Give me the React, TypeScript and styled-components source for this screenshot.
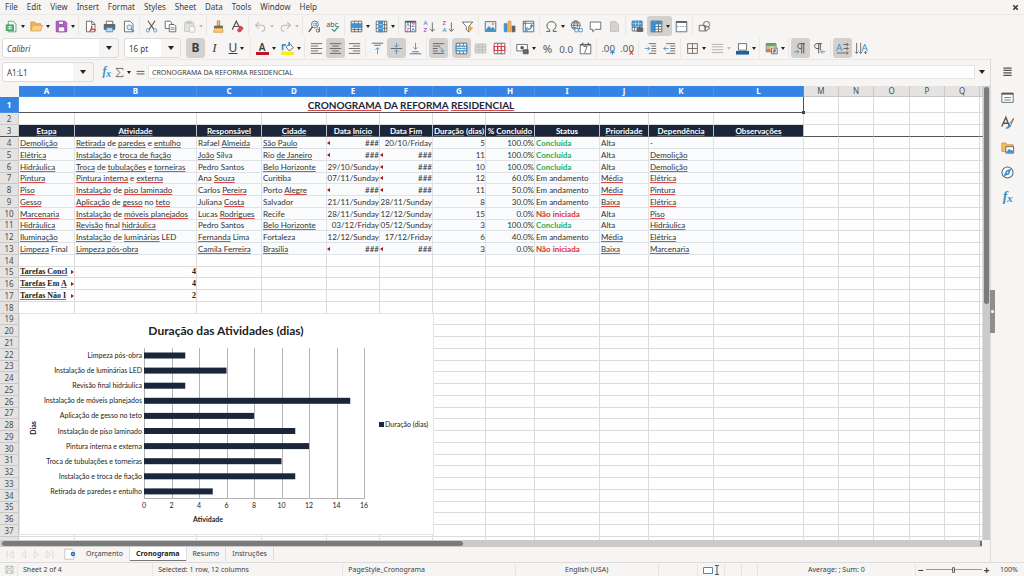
import React from 'react';
import styled, { createGlobalStyle, css } from 'styled-components';

const ui = '"Noto Sans", "Open Sans", sans-serif';
const cellFont = 'Lato, "Open Sans", sans-serif';

const color = {
  chrome: '#f6f5f3',
  line: '#dddcda',
  text: '#3d3d3d',
  ink: '#4c4c4c',
  blue: '#3584e4',
  sky: '#3b8ec8',
  navy: '#1b263b',
  green: '#27ae60',
  red: '#e02f2f',
  active: '#d3d1ce',
};

const GlobalStyle = createGlobalStyle`
  * { box-sizing: border-box; }
  html, body, #root { height: 100%; }
  body { margin: 0; overflow: hidden; background: ${color.chrome}; font: 8px ${ui}; color: ${color.text}; }
  button, input, select { font: inherit; color: inherit; margin: 0; padding: 0; border: 0; background: none; border-radius: 0; }
  button { display: inline-flex; align-items: center; justify-content: center; }
`;

/* ---------- icons ---------- */

const D = '#555';
const B = '#3b8ec8';
const R = '#d9434e';
const V = '#b454c0';
const lines = (rows: number[][], stroke = D) =>
  rows.map(([x1, y, x2], i) => <path key={i} d={`M${x1} ${y}H${x2}`} stroke={stroke} />);
const glyph = (x: number, y: number, size: number, t: string, fill = D, extra: React.SVGProps<SVGTextElement> = {}) => (
  <text x={x} y={y} fontSize={size} fill={fill} stroke="none" fontFamily="Noto Sans, sans-serif" {...extra}>{t}</text>
);
const lato = { fontFamily: 'Lato, sans-serif', fontWeight: 700 };
const serif = { fontFamily: 'Liberation Serif, serif', fontStyle: 'italic', fontWeight: 700 };
const page = 'M3 1.5h7l3.500 3.500v9.500h-10.500z';

const icons: Record<string, React.ReactNode> = {
  new: <><path d="M4 1.500h6l3.500 3.500v9.500H4z" fill="#fff" stroke="#3f9b63" /><path d="M1.500 6h9v7h-9z" fill="#35a35b" stroke="#35a35b" /><path d="M3 8.300h6M3 10.700h6M6 7v5" stroke="#fff" /></>,
  open: <><path d="M1 13V2.500h5l1 2h6v3" fill="#f0b55c" stroke="#d7953a" /><path d="M1 13.500 3.500 6.500H15.500L13 13.500z" fill="#fbd287" stroke="#dda047" /></>,
  save: <><path d="M1.500 1.500h11l2 2v11h-13z" fill="#b264c4" stroke="#9244a8" /><path d="M4.500 1.500h6v4h-6zM4 8.500h8v6H4z" fill="#fff" stroke="#9244a8" /></>,
  pdf: <><path d={page} fill="#fff" stroke={D} /><path d="M9.500 1.500v4h4" stroke={D} /><path d="M7 14c2-2 3-5 2.500-7M8 12c2-1 4-1 6.500 1" stroke={R} strokeWidth="1.600" /></>,
  print: <><path d="M4 5V1.500h8V5" fill="#fff" stroke={D} /><path d="M1.500 5.500h13v6h-13z" fill="#5c6873" stroke={D} /><path d="M4 9.500h8v5H4z" fill="#b9dcf3" stroke={B} /></>,
  preview: <><path d={page} fill="#fff" stroke={D} /><circle cx="9" cy="9" r="3" fill="#d8ecf8" stroke={B} /><path d="m11 11 3.500 3.500" stroke={B} strokeWidth="1.500" /></>,
  cut: <><path d="M3.500 1 11 11.500M12.500 1 5 11.500" stroke={D} strokeWidth="1.300" /><circle cx="3.500" cy="12.800" r="2" stroke={B} /><circle cx="12.500" cy="12.800" r="2" stroke={B} /></>,
  copy: <><path d="M1.500 1.500h6l2 2v7h-8z" fill="#fff" stroke={D} /><path d="M6.500 5.500h6l2 2v7h-8z" fill="#fff" stroke={D} /><path d="M8 9.500h5M8 11.500h5" stroke={B} /></>,
  paste: <g opacity=".45"><path d="M2 3h11v11H2z" fill="#ccc" stroke="#888" /><path d="M5 1.500h5v3H5z" fill="#999" stroke="#888" /><path d="M8 8h6.500v7H8z" fill="#fff" stroke="#888" /></g>,
  clone: <><path d="M6.500 1h3v6h-3z" fill="#f5c36b" stroke="#b8862f" /><path d="M3 7.500h10v2H3z" fill="#777" stroke={D} /><path d="M3 10.500h10l.5 4.500H2z" fill="#f8cf80" stroke="#d7953a" /></>,
  clear: <><path d="M1.500 12 6.500 1.500 11 10M3.500 8h6" stroke={D} strokeWidth="1.500" /><path d="m8 12.500 4-5 3 2.500-3.500 4.500H9z" fill="#e2454f" stroke="#c93640" /></>,
  undo: <path d="M6 2.500 2 6.500l4 4M2 6.500h7.500c5 0 5 7.500 0 7.500" stroke="#bdbbb8" strokeWidth="1.300" />,
  redo: <path d="m10 2.500 4 4-4 4M14 6.500H6.500c-5 0-5 7.500 0 7.500" stroke="#bdbbb8" strokeWidth="1.300" />,
  find: <><circle cx="8.500" cy="5.500" r="4.200" fill="#fff" stroke={D} /><path d="m5.500 8.500-4.500 6" stroke={D} strokeWidth="1.600" /><circle cx="8.500" cy="5.500" r="1.700" stroke={B} /><path d="M10.300 3.500v4" stroke={B} /><circle cx="12" cy="13" r="1.900" stroke={D} /><path d="M14 8.500V15" stroke={D} /></>,
  spell: <>{glyph(-1, 8, 9, 'abc')}<path d="m6 11 3 3 5.500-6.500" stroke="#2f9e6b" strokeWidth="1.500" /></>,
  row: <><path d="M1.500 1.500h13v13h-13zM5.800 1.500v13M10.200 1.500v13M1.500 11.800h13" fill="#fff" stroke={D} /><path d="M1.500 4.500h13v5h-13z" fill="#3f93d4" stroke={B} /></>,
  column: <><path d="M1.500 1.500h13v13h-13zM1.500 5.800h13M1.500 10.200h13M11.800 1.500v13" fill="#fff" stroke={D} /><path d="M4.500 1.500h5v13h-5z" fill="#3f93d4" stroke={B} /><path d="M4.500 5.800h5M4.500 10.200h5" stroke="#a8d1ee" /></>,
  sort: <><path d="M1.500 1.500h13v13h-13zM8 1.500v13" fill="#fff" stroke={D} /><path d="M1.500 2.300h13" stroke={D} strokeWidth="2" /><path d="m3 8 1.800-4L6.500 8M9.500 14l1.800-4 1.700 4" stroke={B} /><path d="M3 10h3.500L3 14h3.500M9.500 4.500H13L9.500 8H13" stroke={V} /></>,
  sortAsc: <>{glyph(0.5, 6.5, 7, 'A', B, lato)}{glyph(0.7, 15, 7, 'Z', V, lato)}<path d="M11.500 3v11M8.500 11l3 3 3-3" stroke={D} /></>,
  sortDesc: <>{glyph(0.7, 6.5, 7, 'Z', V, lato)}{glyph(0.5, 15, 7, 'A', B, lato)}<path d="M11.500 3v11M8.500 11l3 3 3-3" stroke={D} /></>,
  filter: <><path d="M1.500 2.500h13L9.500 8v6.500l-3-2.500V8z" fill="#fff" stroke={D} /><path d="m12 7-3 4h3l-2 4 4.500-5.500h-3z" fill="#f5a33b" stroke="#e08a20" strokeWidth=".5" /></>,
  image: <><path d="M1.500 2h13v12h-13z" fill="#e6f2fb" stroke={D} /><path d="m2 13 4-5 3 3 2-2 3 4z" fill={B} stroke={B} /><circle cx="11" cy="5" r="1.500" fill="#f5a33b" stroke="none" /></>,
  chart: <><path d="M1.500 4.500H5v10H1.500z" fill="#3f93d4" stroke={B} /><path d="M6.300 1.500h3.500v13H6.300z" fill="#f4b65b" stroke="#d7953a" /><path d="M11.200 7.500h3.500v7h-3.500z" fill="#6c6258" stroke={D} /></>,
  pivot: <><path d="M1.500 1.500h13v13h-13zM1.500 4h13M4 1.500v13" fill="#fff" stroke={D} /><path d="M7 11.500c4 0 5-2 5-5M7 9l-2 2.500L7 14M10 8l2-2 2 2" stroke={B} strokeWidth="1.500" /></>,
  omega: <path d="M1.500 14H6v-1.500C.5 9.500 1.500 2 8 2s7.500 7.500 2 10.500V14h4.500" stroke={D} strokeWidth="1.200" />,
  link: <><circle cx="7" cy="6.500" r="5.500" stroke={D} /><path d="M1.500 6.500h11M7 1c-3 3-3 8 0 11M7 1c3 3 3 8 0 11M2.500 3.500h9M2.500 9.500h5" stroke={D} /><path d="M6 10.500h4v4H6zM11 10.500h4v4h-4z" fill="#fff" stroke={B} /></>,
  comment: <path d="M1.500 2.500h13v9H8l-3.500 3v-3h-3z" fill="#fff" stroke={D} />,
  blank: <path d="M3 2h6.500L13 5.500V14H3z" fill="#d5d3d0" stroke="#bdbbb8" />,
  headers: <><path d="M1.500 1.500h12v12h-12zM1.500 9h12M4.500 1.500v12M10.500 1.500v12" fill="#fff" stroke={D} /><path d="M1.500 1.500h12v6h-12z" fill="#3f93d4" stroke={B} /><path d="M1.500 4.500h12M5.500 1.500v6M9.500 1.500v6" stroke="#a8d1ee" /><path d="M7.500 10h7v4h-7z" fill="#5c6873" stroke={D} /></>,
  freeze: <><path d="M1.500 1.500h13v13h-13zM1.500 8h13M1.500 11.300h13M10.500 1.500v13" fill="#fff" stroke={D} /><path d="M1.500 1.500h13v3.500h-13zM1.500 5H6v9.500H1.500z" fill="#3f93d4" stroke={B} /><path d="M6 5v9.500M10 1.500V5" stroke="#2d74ad" /></>,
  split: <><path d="M1.500 2h13v12.500h-13z" fill="#fff" stroke={D} /><path d="M1.500 2.500h13" stroke={D} strokeWidth="2" /><path d="M2 8h12" stroke={B} strokeDasharray="2 1.500" /></>,
  shapes: <><path d="M1.500 6.500h7v7h-7z" stroke={D} /><circle cx="10.500" cy="5.500" r="3.800" stroke={D} /><path d="m9.500 7 5 3-5 4z" fill={color.chrome} stroke={D} /></>,
  alignLeft: lines([[1, 2, 15], [1, 5, 10], [1, 8, 15], [1, 11, 10], [1, 14, 15]]),
  alignCenter: lines([[1, 2, 15], [4, 5, 12], [1, 8, 15], [4, 11, 12], [1, 14, 15]]),
  alignRight: lines([[1, 2, 15], [6, 5, 15], [1, 8, 15], [6, 11, 15], [1, 14, 15]]),
  top: <>{lines([[1, 1.500, 15], [4, 4, 12]])}<path d="M8 15V7M5.500 9.500 8 7l2.500 2.500" stroke={B} /></>,
  middle: <>{lines([[1, 8, 15]])}<path d="M8 1v5M5.500 4 8 6.500 10.500 4M8 15v-5M5.500 12 8 9.500l2.500 2.500" stroke={B} /></>,
  bottom: <>{lines([[4, 12, 12], [1, 14.500, 15]])}<path d="M8 1v8M5.500 6.500 8 9l2.500-2.500" stroke={B} /></>,
  wrap: <>{lines([[1, 2, 15], [1, 5, 10], [1, 8, 7], [1, 11, 7], [1, 14, 15]])}<path d="M9 7c3 0 4 2 4 5M10.500 10.500 13 12.500l2-2.500" stroke={B} /></>,
  merge: <><path d="M1.500 1.500h13v13h-13zM5.800 1.500V5M10.200 1.500V5M5.800 11v3.500M10.200 11v3.500" fill="#fff" stroke={D} /><path d="M1.500 5h13v6h-13z" fill="#e3f1fb" stroke={B} strokeWidth="1.400" /><path d="M3 8h10M5 6.500 3.500 8 5 9.500M11 6.500 12.500 8 11 9.500" stroke={B} /></>,
  mergeOff: <path d="M1.500 2.500h13v11h-13zM1.500 6h13M1.500 10h13M5.800 2.500v11M10.200 2.500v11" fill="#dddbd8" stroke="#b9b7b4" />,
  unmerge: <><path d="M1.500 1.500h13v13h-13zM5.800 1.500v13M10.200 1.500v13" fill="#fff" stroke={D} /><path d="M1.500 5.500h13v5h-13zM5.800 5.500v5M10.200 5.500v5" stroke={R} strokeWidth="1.400" /></>,
  currency: <><path d="M1 3h13v8H1z" fill="#fff" stroke={D} /><circle cx="7.500" cy="7" r="2.200" fill={D} stroke="none" /><path d="M9 9.500h6v5H9z" fill="#666" stroke={D} /></>,
  percent: glyph(2, 13, 14, '%', D),
  number: glyph(-1, 13, 12, '0.0', D),
  date: <><path d="M1.500 3h13v11.500h-13z" fill="#fff" stroke={D} /><path d="M1.500 3.500h13M4.500 1v3M11.500 1v3" stroke={D} strokeWidth="1.500" />{glyph(5, 13, 10, '7')}</>,
  addDec: <>{glyph(-1, 12, 12, '.00')}<path d="M10 13h5.500M12.800 10.300v5.500" stroke={B} strokeWidth="1.300" /></>,
  delDec: <>{glyph(-1, 12, 12, '.00')}<path d="m10.500 10.500 4.500 5M15 10.500l-4.500 5" stroke={R} strokeWidth="1.300" /></>,
  indent: <>{lines([[6, 2, 15], [9, 5, 15], [9, 8, 15], [9, 11, 15], [6, 14, 15]])}<path d="M1 8h6M4.500 5.500 7 8l-2.500 2.500" stroke={B} /></>,
  outdent: <>{lines([[4, 2, 15], [9, 5, 15], [9, 8, 15], [9, 11, 15], [4, 14, 15]])}<path d="M1 8h6M3.500 5.500 1 8l2.500 2.500" stroke={B} /></>,
  borders: <path d="M2 2h12v12H2zM8 2v12M2 8h12" stroke="#6a5a48" />,
  borderStyle: lines([[1, 3, 15], [1, 6, 15], [1, 9.500, 15], [1, 13, 15]], '#a9a7a4'),
  borderColor: <><path d="M3 2h10v8H3z" fill="#fff" stroke={D} /><path d="M0 11h16v4.500H0z" fill="#1f5fa8" stroke="none" /></>,
  cond: <><path d="M1.500 2h12v10h-12z" fill="#fff" stroke={D} /><path d="M2 2.500h11v3H2z" fill="#57a869" stroke="none" /><path d="M2 5.500h5v3H2z" fill="#f1b04e" stroke="none" /><path d="M2 8.500h5v3H2z" fill="#e36f5c" stroke="none" /><path d="M8 7.500h7v7H8z" fill="#fff" stroke={D} /><path d="M9.500 10h4M9.500 12h4M12.500 8.500l-2 5" stroke={D} /></>,
  ltr: <><path d="M13.500 2H7.500c-4 0-4 6 0 6H9M9.500 2v12M12 2v12" stroke={D} strokeWidth="1.200" /><path d="M0 12h6M3.500 9.500 6 12l-2.500 2.500" stroke={B} /></>,
  rtl: <><path d="M11 2H5c-4 0-4 6 0 6h2M7 2v12M9 2v8" stroke={D} strokeWidth="1.200" /><path d="M9.500 12h6M12 9.500 9.500 12l2.500 2.500" stroke={B} /></>,
  dirLR: <>{glyph(0, 11, 12, 'A', B)}<path d="M9 3h6M13 1l2 2-2 2M9 8h6M13 6l2 2-2 2M1 13.500h14M13 11.500l2 2-2 2" stroke={D} /></>,
  dirTB: <>{glyph(8, 11, 12, 'A', B)}<path d="M2 1v13M0 12l2 2 2-2M7 1v13M5 12l2 2 2-2M13 11v3M11.500 12.500l1.500 2 1.500-2" stroke={D} /></>,
  properties: <><path d="M1 2.500h14v11.500H1z" fill="#fff" stroke={D} /><path d="M1 3.500h14" stroke={D} strokeWidth="2" /><path d="M4 8h8M4 11h8" stroke={B} strokeWidth="1.200" /></>,
  styles: <><path d="M1 13 6 1.500 10.500 13M3 9h6" stroke={D} strokeWidth="1.700" /><path d="m15.500 3-6 8 2 1.500z" fill="#fff" stroke={D} /><path d="M6 15c3 .5 5-1 5.500-3l-2-1c-1 2-1 3-3.500 4z" fill={B} stroke={B} /></>,
  gallery: <><path d="M1 13V2.500h5l1.500 2H15V13z" fill="#f3b95f" stroke="#d7953a" /><path d="M6 7h9.500v8H6z" fill="#fff" stroke={D} /><path d="m7 14 3-4 2 2 1-1 2 3z" fill={B} stroke={B} /></>,
  navigator: <><circle cx="8" cy="8" r="6.800" fill="#fff" stroke="#56646e" strokeWidth="1.300" /><path d="m12 4-2.500 6-5.500 2 2.500-6z" fill={B} stroke={B} /><circle cx="8" cy="8" r="1" fill="#fff" stroke="none" /></>,
  fx: <>{glyph(2, 12, 17, 'f', B, serif)}{glyph(7.5, 14, 14, 'x', B, serif)}</>,
  sigma: <path d="M13 4V2H3l5.500 6L3 14h10v-2" stroke={D} strokeWidth="1.200" />,
  equals: <path d="M1 6h14M1 10.500h14" stroke={D} strokeWidth="1.700" />,
  menu: <path d="M2 3h12M2 6.500h12M2 10h12M2 13.500h12" stroke={D} strokeWidth="1.800" />,
  close: <path d="m4 4 8 8M12 4l-8 8" stroke="#333" strokeWidth="2.600" />,
  addSheet: <><path d="M1 1.500h9l3 3V15H1z" fill="#fff" stroke="#b9b7b4" /><circle cx="12" cy="8" r="3" fill="#2b6cb0" stroke="none" /><path d="M10.500 8h3" stroke="#fff" /></>,
  disk: <><path d="M1.500 2h13v12.500h-13z" stroke="#9a9896" /><path d="M4.500 2v4h7V2M4 14.500V9.500h8v5" stroke="#9a9896" /></>,
  first: <path d="M3 2v12M12 3 6 8l6 5z" stroke="#d2d0cd" />,
  prev: <path d="M11 3 5 8l6 5z" stroke="#d2d0cd" />,
  next: <path d="m5 3 6 5-6 5z" stroke="#d2d0cd" />,
  last: <path d="M13 2v12M4 3l6 5-6 5z" stroke="#d2d0cd" />,
};

const Svg = styled.svg<{ $size: number }>`
  width: ${(p) => p.$size}px;
  height: ${(p) => p.$size}px;
  flex: none;
  overflow: visible;
`;
const Icon = ({ name, size = 13 }: { name: string; size?: number }) => (
  <Svg $size={size} viewBox="0 0 16 16" fill="none" strokeWidth={1} aria-hidden>{icons[name]}</Svg>
);

const Caret = styled.span<{ $wide?: boolean; $faint?: boolean }>`
  width: 0;
  height: 0;
  flex: none;
  border: solid transparent;
  border-width: ${(p) => (p.$wide ? '4px 3px 0' : '3px 2px 0')};
  border-top-color: ${(p) => (p.$faint ? '#c4c2bf' : '#222')};
`;

/* ---------- menu bar and toolbars ---------- */

const Window = styled.div`
  display: flex;
  flex-direction: column;
  height: 100vh;
`;
const MenuBar = styled.nav`
  display: flex;
  align-items: center;
  gap: 9px;
  height: 15px;
  padding: 0 4px 0 5px;
  border-bottom: 1px solid #eae9e6;
  line-height: 14px;
  flex: none;
`;
const MenuItem = styled.button``;
const Spacer = styled.span`flex: 1;`;
const Toolbar = styled.div`
  display: flex;
  align-items: center;
  height: 22px;
  padding-left: 2px;
  flex: none;
`;
const ToolButton = styled.button<{ $active?: boolean; $menu?: boolean }>`
  width: ${(p) => (p.$menu ? 25 : 19)}px;
  height: 20px;
  flex: none;
  gap: 3px;
  border-radius: 3px;
  ${(p) => p.$active && css`background: ${color.active};`}
`;
const Divider = styled.span`
  width: 1px;
  height: 20px;
  margin: 0 2px 0 1px;
  background: #e9e8e5;
  flex: none;
`;
const Letter = styled.span<{ $kind: 'b' | 'i' | 'u' | 'color' }>`
  font-size: 12px;
  line-height: 12px;
  ${(p) => p.$kind === 'b' && css`font-weight: 700;`}
  ${(p) => p.$kind === 'i' && css`font-family: "Liberation Serif", serif; font-style: italic; font-size: 13px;`}
  ${(p) => p.$kind === 'u' && css`text-decoration: underline;`}
  ${(p) => p.$kind === 'color' && css`font-size: 10px; line-height: 10px; width: 13px; border-bottom: 3px solid #c3161c; font-weight: 600;`}
`;

type Tool = { id: string; label: string; menu?: boolean; active?: boolean; faint?: boolean };
const t = (id: string, label: string, o: Partial<Tool> = {}): Tool => ({ id, label, ...o });
const standardGroups: Tool[][] = [
  [t('new', 'New', { menu: true }), t('open', 'Open', { menu: true }), t('save', 'Save', { menu: true })],
  [t('pdf', 'Export as PDF'), t('print', 'Print'), t('preview', 'Print preview')],
  [t('cut', 'Cut'), t('copy', 'Copy'), t('paste', 'Paste', { menu: true, faint: true })],
  [t('clone', 'Clone formatting'), t('clear', 'Clear formatting')],
  [t('undo', 'Undo', { menu: true, faint: true }), t('redo', 'Redo', { menu: true, faint: true })],
  [t('find', 'Find and replace'), t('spell', 'Spelling')],
  [t('row', 'Row', { menu: true }), t('column', 'Column', { menu: true })],
  [t('sort', 'Sort'), t('sortAsc', 'Sort ascending'), t('sortDesc', 'Sort descending'), t('filter', 'AutoFilter')],
  [t('image', 'Insert image'), t('chart', 'Insert chart'), t('pivot', 'Insert pivot table')],
  [t('omega', 'Special character', { menu: true }), t('link', 'Hyperlink'), t('comment', 'Comment'), t('blank', 'Headers and footers')],
  [t('headers', 'Print area'), t('freeze', 'Freeze', { menu: true, active: true }), t('split', 'Split window')],
  [t('shapes', 'Draw functions')],
];
const formatGroups: Tool[][] = [
  [t('alignLeft', 'Align left'), t('alignCenter', 'Align center', { active: true }), t('alignRight', 'Align right')],
  [t('top', 'Align top'), t('middle', 'Center vertically', { active: true }), t('bottom', 'Align bottom')],
  [t('wrap', 'Wrap text', { active: true })],
  [t('merge', 'Merge and center', { active: true }), t('mergeOff', 'Merge cells'), t('unmerge', 'Unmerge cells')],
  [t('currency', 'Currency', { menu: true }), t('percent', 'Percent'), t('number', 'Number'), t('date', 'Date')],
  [t('addDec', 'Add decimal'), t('delDec', 'Delete decimal')],
  [t('indent', 'Increase indent'), t('outdent', 'Decrease indent')],
  [t('borders', 'Borders', { menu: true }), t('borderStyle', 'Border style', { menu: true, faint: true }), t('borderColor', 'Border color', { menu: true })],
  [t('cond', 'Conditional', { menu: true })],
  [t('ltr', 'Left to right', { active: true }), t('rtl', 'Right to left')],
  [t('dirLR', 'Text horizontal', { active: true }), t('dirTB', 'Text vertical')],
];
const ToolGroups = ({ groups }: { groups: Tool[][] }) => (
  <>
    {groups.map((group, i) => (
      <React.Fragment key={i}>
        {i > 0 && <Divider />}
        {group.map((tool) => (
          <ToolButton key={tool.id} aria-label={tool.label} $menu={tool.menu} $active={tool.active}>
            <Icon name={tool.id} />
            {tool.menu && <Caret $faint={tool.faint} />}
          </ToolButton>
        ))}
      </React.Fragment>
    ))}
  </>
);

const Combo = styled.label<{ $w: number; $arrow: number }>`
  display: grid;
  grid-template-columns: 1fr ${(p) => p.$arrow}px;
  align-items: center;
  justify-items: center;
  width: ${(p) => p.$w}px;
  height: 20px;
  margin-right: 5px;
  border: 1px solid ${color.line};
  border-radius: 3px;
  background: linear-gradient(to left, ${color.chrome} ${(p) => p.$arrow}px, #fff 0);
  flex: none;

  > select, > input {
    grid-area: 1 / 1 / 2 / 3;
    width: 100%;
    height: 100%;
    padding-left: 4px;
    appearance: none;
    outline: 0;
  }
  > span { grid-area: 1 / 2; }
`;
const FontSelect = styled.select<{ $italic?: boolean }>`
  font-style: ${(p) => (p.$italic ? 'italic' : 'normal')};
`;

const FormulaRow = styled.div`
  display: flex;
  align-items: center;
  height: 27px;
  padding: 0 5px 2px 2px;
  border-top: 1px solid #e9e8e5;
  flex: none;
`;
const NameInput = styled.input``;
const FormulaButton = styled.button<{ $w: number }>`
  width: ${(p) => p.$w}px;
  height: 16px;
  flex: none;
`;
const FormulaInput = styled.input`
  flex: 1;
  min-width: 0;
  height: 14px;
  margin: 0 4px 0 1px;
  padding-left: 3px;
  border: 1px solid #e6e5e2;
  background: #fff;
  font-size: 7px;
  outline: 0;
`;

/* ---------- work area ---------- */

const Work = styled.div`
  display: flex;
  flex: 1;
  min-height: 0;
`;
const Main = styled.main`
  display: flex;
  flex-direction: column;
  flex: 1;
  min-width: 0;
`;
const SheetArea = styled.div`
  display: flex;
  flex: 1;
  min-height: 0;
`;
const SheetView = styled.div`
  position: relative;
  flex: 1;
  min-width: 0;
  overflow: hidden;
  background: #fff;
`;
const VScroll = styled.div`
  width: 7px;
  background: #cccbc9;
  padding: 1px;
  flex: none;
`;
const VThumb = styled.div`
  height: 48%;
  border-radius: 3px;
  background: #7b7b7b;
`;
const HScroll = styled.div`
  display: flex;
  justify-content: space-between;
  height: 7px;
  margin-right: 8px;
  padding: 1px 0 1px 2px;
  background: #cccbc9;
  flex: none;
`;
const HThumb = styled.div`
  width: 47%;
  border-radius: 3px;
  background: #7b7b7b;
`;
const SplitGrip = styled.div`
  width: 2px;
  background: #6e6e6e;
`;
const Sidebar = styled.aside`
  position: relative;
  display: flex;
  flex-direction: column;
  align-items: center;
  gap: 9px;
  width: 34px;
  padding-top: 4px;
  border-left: 1px solid ${color.line};
  flex: none;
`;
const SideButton = styled.button<{ $first?: boolean }>`
  width: 18px;
  height: 16px;
  margin-bottom: ${(p) => (p.$first ? 1 : 0)}px;
`;
const SideHandle = styled.span`
  position: absolute;
  left: -1px;
  top: 46%;
  display: flex;
  align-items: center;
  width: 5px;
  height: 43px;
  background: #8f8e8c;

  &::after {
    content: '';
    width: 3px;
    height: 3px;
    margin-left: 1px;
    border-radius: 50%;
    background: #fff;
  }
`;

/* ---------- sheet ---------- */

const Table = styled.table`
  width: 100%;
  table-layout: fixed;
  border-collapse: separate;
  border-spacing: 0;
  font-family: ${cellFont};
  color: #333;
  line-height: 10px;
`;
const Row = styled.tr<{ $h?: number }>`
  height: ${(p) => p.$h ?? 12}px;
`;
const Corner = styled.th`
  padding: 0;
  background: ${color.chrome};
`;
const HeadCell = styled.th<{ $on?: boolean; $freeze?: boolean }>`
  padding: 0;
  overflow: hidden;
  font: ${(p) => (p.$on ? 700 : 400)} 8px/10px ${ui};
  color: ${(p) => (p.$on ? '#fff' : '#4d4d4d')};
  background: ${(p) => (p.$on ? color.blue : '#e4e3e1')};
  border-right: 1px solid ${(p) => (p.$on ? '#4d90e0' : '#c9c8c6')};
  border-bottom: 1px solid ${(p) => (p.$freeze ? '#555' : p.$on ? '#4d90e0' : '#c9c8c6')};
`;
type CellProps = { $align?: 'left' | 'right' | 'center'; $tone?: 'green' | 'red'; $data?: boolean; $freeze?: boolean; $serif?: boolean };
const Cell = styled.td<CellProps>`
  padding: 0 0 0 ${(p) => (p.$align === 'right' ? 0 : 1)}px;
  overflow: hidden;
  white-space: nowrap;
  font-size: 8px;
  text-align: ${(p) => p.$align ?? 'left'};
  border-right: 1px solid ${(p) => (p.$data ? '#dfe2e6' : '#dcdcdc')};
  border-bottom: 1px solid ${(p) => (p.$freeze ? '#555' : p.$data ? '#dfe2e6' : '#dcdcdc')};
  ${(p) => p.$data && css`background: #f9fbfc;`}
  ${(p) => p.$tone && css`color: ${color[p.$tone]}; font-weight: 700;`}
  ${(p) => p.$serif && css`font: 700 8px/10px "Liberation Serif", serif; color: #222;`}
`;
const TitleCell = styled.td`
  position: relative;
  padding: 0;
  text-align: center;
  white-space: nowrap;
  font-size: 10px;
  font-weight: 700;
  line-height: 14px;
  color: ${color.navy};
  border-right: 1px solid #555;
  border-bottom: 1px solid #555;

  &::after {
    content: '';
    position: absolute;
    right: -2px;
    bottom: -2px;
    width: 3px;
    height: 3px;
    background: #444;
  }
`;
const FieldCell = styled.th`
  padding: 0;
  overflow: hidden;
  white-space: nowrap;
  font-size: 8px;
  font-weight: 700;
  color: #fff;
  background: ${color.navy};
  border-right: 1px solid #b9bec8;
  border-bottom: 1px solid #555;
`;
const Misspelt = styled.span`
  text-decoration: underline solid #dd4a4c 1px;
  text-underline-offset: 1px;
  text-decoration-skip-ink: none;
`;
const CellBody = styled.span`
  display: flex;
  align-items: center;
  justify-content: space-between;
`;
const Overflow = styled.i<{ $right?: boolean }>`
  flex: none;
  width: 0;
  height: 0;
  border: 2px solid transparent;
  ${(p) => (p.$right ? css`border-left: 3px solid #a11; border-right: 0;` : css`border-right: 3px solid #a11; border-left: 0;`)}
`;

/* Text between tildes is flagged by the spell checker. */
const Spelled = ({ text }: { text: string }) => (
  <>{text.split('~').map((part, i) => (i % 2 ? <Misspelt key={i}>{part}</Misspelt> : part))}</>
);

const columnWidths = [19, 56, 122, 65, 65, 53, 53, 53, 49, 65, 49, 65, 90, 35, 35, 36, 35, 35];
const letters = 'ABCDEFGHIJKLMNOPQ'.split('');
const fields = ['~Etapa~', '~Atividade~', '~Responsável~', '~Cidade~', 'Data ~Início~', 'Data ~Fim~', '~Duração~ (~dias~)', '% ~Concluído~', 'Status', '~Prioridade~', '~Dependência~', '~Observações~'];
const tasks: string[][] = [
  ['~Demolição~', '~Retirada~ de ~paredes~ e ~entulho~', 'Rafael ~Almeida~', '~São Paulo~', '###', '20/10/Friday', '5', '100.0%', 'Concluída', 'Alta', '-', ''],
  ['~Elétrica~', '~Instalação~ e ~troca de fiação~', '~João~ Silva', 'Rio ~de Janeiro~', '###', '###', '11', '100.0%', 'Concluída', 'Alta', '~Demolição~', ''],
  ['~Hidráulica~', '~Troca~ de ~tubulações~ e ~torneiras~', 'Pedro Santos', '~Belo Horizonte~', '29/10/Sunday', '###', '10', '100.0%', 'Concluída', 'Alta', '~Demolição~', ''],
  ['~Pintura~', '~Pintura interna~ e ~externa~', 'Ana ~Souza~', 'Curitiba', '07/11/Sunday', '###', '12', '60.0%', 'Em andamento', '~Média~', '~Elétrica~', ''],
  ['~Piso~', '~Instalação~ de ~piso laminado~', 'Carlos ~Pereira~', 'Porto ~Alegre~', '###', '###', '11', '50.0%', 'Em andamento', '~Média~', '~Pintura~', ''],
  ['~Gesso~', '~Aplicação~ de ~gesso~ no ~teto~', 'Juliana ~Costa~', 'Salvador', '21/11/Sunday', '28/11/Sunday', '8', '30.0%', 'Em andamento', '~Baixa~', '~Elétrica~', ''],
  ['~Marcenaria~', '~Instalação~ de ~móveis planejados~', 'Lucas ~Rodrigues~', 'Recife', '28/11/Sunday', '12/12/Sunday', '15', '0.0%', 'Não iniciada', 'Alta', '~Piso~', ''],
  ['~Hidráulica~', '~Revisão~ final ~hidráulica~', 'Pedro Santos', '~Belo Horizonte~', '03/12/Friday', '05/12/Sunday', '3', '100.0%', 'Concluída', 'Alta', '~Hidráulica~', ''],
  ['~Iluminação~', '~Instalação~ de ~luminárias~ LED', '~Fernanda~ Lima', 'Fortaleza', '12/12/Sunday', '17/12/Friday', '6', '40.0%', 'Em andamento', '~Média~', '~Elétrica~', ''],
  ['~Limpeza~ Final', '~Limpeza pós-obra~', '~Camila Ferreira~', '~Brasília~', '###', '###', '3', '0.0%', 'Não iniciada', '~Baixa~', '~Marcenaria~', ''],
];
const summary: Record<number, [string, string]> = {
  15: ['~Tarefas Concl~', '4'],
  16: ['~Tarefas~ Em ~A~', '4'],
  17: ['~Tarefas Não I~', '2'],
};
const lastRow = 37;
const blanks = (from: number, to: number, freeze = false) =>
  Array.from({ length: to - from }, (_, i) => <Cell key={from + i} $freeze={freeze} />);
const tone = (v: string) => (v === 'Concluída' ? 'green' : v === 'Não iniciada' ? 'red' : undefined);

const TaskCell = ({ value, col }: { value: string; col: number }) => {
  if (value === '###') {
    return <Cell $data $align="right"><CellBody><Overflow />###</CellBody></Cell>;
  }
  return (
    <Cell $data $align={col >= 4 && col <= 7 ? 'right' : 'left'} $tone={tone(value)}>
      <Spelled text={value} />
    </Cell>
  );
};

const BodyRow = ({ n }: { n: number }) => {
  const task = tasks[n - 4];
  const total = summary[n];
  return (
    <Row $h={n % 4 === 3 ? 11 : 12}>
      <HeadCell>{n <= lastRow && n}</HeadCell>
      {task && task.map((v, i) => <TaskCell key={i} value={v} col={i} />)}
      {total && (
        <>
          <Cell $serif><CellBody><span><Spelled text={total[0]} /></span><Overflow $right /></CellBody></Cell>
          <Cell $serif $align="right">{total[1]}</Cell>
        </>
      )}
      {blanks(task ? 12 : total ? 2 : 0, 18)}
    </Row>
  );
};

const Sheet = () => (
  <Table>
    <colgroup>
      {columnWidths.map((w, i) => <col key={i} style={{ width: w }} />)}
      <col />
    </colgroup>
    <thead>
      <Row $h={11}>
        <Corner />
        {letters.map((l, i) => <HeadCell key={l} scope="col" $on={i < 12}>{l}</HeadCell>)}
        <HeadCell />
      </Row>
    </thead>
    <tbody>
      <Row $h={16}>
        <HeadCell $on>1</HeadCell>
        <TitleCell colSpan={12}><Spelled text="~CRONOGRAMA~ DA ~REFORMA~ ~RESIDENCIAL~" /></TitleCell>
        {blanks(12, 18)}
      </Row>
      <Row><HeadCell>2</HeadCell>{blanks(0, 18)}</Row>
      <Row>
        <HeadCell $freeze>3</HeadCell>
        {fields.map((f) => <FieldCell key={f} scope="col"><Spelled text={f} /></FieldCell>)}
        {blanks(12, 18, true)}
      </Row>
      {Array.from({ length: 35 }, (_, i) => <BodyRow key={i} n={i + 4} />)}
    </tbody>
  </Table>
);

/* ---------- chart ---------- */

const ChartFrame = styled.figure`
  position: absolute;
  left: 19px;
  top: 227px;
  width: 415px;
  height: 222px;
  margin: 0;
  background: #fff;
  border: 1px solid #e4e4e4;
`;
const ChartSvg = styled.svg`
  display: block;
  width: 100%;
  height: 100%;
  font: 7px ${cellFont};
  fill: #222;
`;
const bars: [string, number][] = [
  ['Limpeza pós-obra', 3], ['Instalação de luminárias LED', 6], ['Revisão final hidráulica', 3],
  ['Instalação de móveis planejados', 15], ['Aplicação de gesso no teto', 8], ['Instalação de piso laminado', 11],
  ['Pintura interna e externa', 12], ['Troca de tubulações e torneiras', 10], ['Instalação e troca de fiação', 11],
  ['Retirada de paredes e entulho', 5],
];
const plot = { x: 124, y: 34, w: 220, h: 151 };
const sx = (v: number) => plot.x + (v / 16) * plot.w;
const band = plot.h / bars.length;

const Chart = () => (
  <ChartFrame>
    <ChartSvg viewBox="0 0 413 220" role="img" aria-label="Duração das Atividades">
      <text x={206} y={21} textAnchor="middle" fontSize={12} fontWeight={700}>Duração das Atividades (dias)</text>
      {[0, 2, 4, 6, 8, 10, 12, 14, 16].map((v) => (
        <g key={v}>
          <path d={`M${Math.round(sx(v)) + 0.5} ${plot.y}v${plot.h}`} stroke="#b3b3b3" />
          <text x={sx(v)} y={194} textAnchor="middle">{v}</text>
        </g>
      ))}
      <path d={`M${plot.x} ${plot.y + plot.h - 0.5}h${plot.w}`} stroke="#b3b3b3" />
      {bars.map(([name, v], i) => (
        <g key={name}>
          <rect x={plot.x} y={plot.y + band * i + 4.5} width={sx(v) - plot.x} height={6} fill={color.navy} />
          <text x={plot.x - 2} y={plot.y + band * i + 10} textAnchor="end">{name}</text>
        </g>
      ))}
      <text transform="translate(16 114) rotate(-90)" textAnchor="middle" fontWeight={700}>Dias</text>
      <text x={188} y={208} textAnchor="middle" fontWeight={700}>Atividade</text>
      <rect x={359} y={108} width={5} height={5} fill={color.navy} />
      <text x={365} y={113}>Duração (dias)</text>
    </ChartSvg>
  </ChartFrame>
);

/* ---------- tabs and status bar ---------- */

const TabStrip = styled.div`
  display: flex;
  align-items: stretch;
  height: 15px;
  padding: 0 0 1px 5px;
  flex: none;
`;
const TabNav = styled.div`
  display: flex;
  align-items: center;
  width: 75px;
  padding-right: 4px;
  gap: 2px;
`;
const TabList = styled.div`
  display: flex;
  align-items: stretch;
`;
const Tab = styled.button<{ $on?: boolean }>`
  padding: 0 6px;
  font-size: 7px;
  line-height: 12px;
  border-right: 1px solid ${color.line};
  ${(p) => p.$on && css`font-weight: 700; background: #fff; color: #222; box-shadow: inset 0 -1px #777;`}
`;
const StatusBar = styled.footer`
  display: grid;
  grid-template-columns: 18px 135fr 190fr 172fr 143fr 39fr 27fr 17fr 16fr 158fr 72px 36px;
  align-items: center;
  height: 14px;
  border-top: 1px solid ${color.line};
  font-size: 7px;
  flex: none;
`;
const Status = styled.span<{ $center?: boolean }>`
  display: flex;
  align-items: center;
  justify-content: ${(p) => (p.$center ? 'center' : 'flex-start')};
  height: 12px;
  padding-left: ${(p) => (p.$center ? 0 : 5)}px;
  border-right: 1px solid #e6e5e2;
`;
const ZoomRow = styled.span`
  display: flex;
  align-items: center;
  gap: 2px;
  padding-left: 2px;
`;
const ZoomStep = styled.button`
  width: 6px;
  height: 10px;
  font-size: 10px;
  font-weight: 700;
  line-height: 10px;
`;
const ZoomSlider = styled.input`
  appearance: none;
  width: 56px;
  height: 8px;
  background: linear-gradient(#999, #999) center / 100% 1px no-repeat;
  &::-webkit-slider-thumb {
    appearance: none;
    width: 3px;
    height: 6px;
    border: 1px solid #666;
    border-radius: 1px;
    background: #ddd;
  }
`;
const ZoomValue = styled.span`padding-left: 12px;`;

const menus = ['File', 'Edit', 'View', 'Insert', 'Format', 'Styles', 'Sheet', 'Data', 'Tools', 'Window', 'Help'];
const tabs = ['Orçamento', 'Cronograma', 'Resumo', 'Instruções'];

export default function App() {
  return (
    <>
      <GlobalStyle />
      <Window>
        <MenuBar>
          {menus.map((m) => <MenuItem key={m}>{m}</MenuItem>)}
          <Spacer />
          <MenuItem aria-label="Close"><Icon name="close" size={9} /></MenuItem>
        </MenuBar>
        <Toolbar role="toolbar" aria-label="Standard">
          <ToolGroups groups={standardGroups} />
        </Toolbar>
        <Toolbar role="toolbar" aria-label="Formatting">
          <Combo $w={117} $arrow={19}>
            <FontSelect aria-label="Font name" $italic><option>Calibri</option></FontSelect>
            <Caret $wide />
          </Combo>
          <Combo $w={57} $arrow={19}>
            <FontSelect aria-label="Font size"><option>16 pt</option></FontSelect>
            <Caret $wide />
          </Combo>
          <ToolButton aria-label="Bold" $active><Letter $kind="b">B</Letter></ToolButton>
          <ToolButton aria-label="Italic"><Letter $kind="i">I</Letter></ToolButton>
          <ToolButton aria-label="Underline" $menu><Letter $kind="u">U</Letter><Caret /></ToolButton>
          <Divider />
          <ToolButton aria-label="Font color" $menu><Letter $kind="color">A</Letter><Caret /></ToolButton>
          <ToolButton aria-label="Highlighting" $menu>
            <Svg $size={13} viewBox="0 0 16 16" fill="none" aria-hidden>
              <path d="M0 12h16v4H0z" fill="#f7ee12" />
              <path d="m6 6 5-4 4 5-5 4z" fill="#fff" stroke={D} />
              <path d="M2 10V3.500h4M10 0v5" stroke={B} strokeWidth="2" />
            </Svg>
            <Caret />
          </ToolButton>
          <Divider />
          <ToolGroups groups={formatGroups} />
        </Toolbar>
        <Work>
          <Main>
            <FormulaRow>
              <Combo $w={92} $arrow={20}>
                <NameInput aria-label="Name box" defaultValue="A1:L1" />
                <Caret $wide />
              </Combo>
              <FormulaButton $w={14} aria-label="Function wizard"><Icon name="fx" size={11} /></FormulaButton>
              <FormulaButton $w={12} aria-label="Select function"><Icon name="sigma" size={11} /></FormulaButton>
              <FormulaButton $w={8} aria-label="Function list"><Caret /></FormulaButton>
              <FormulaButton $w={14} aria-label="Formula"><Icon name="equals" size={9} /></FormulaButton>
              <FormulaInput aria-label="Formula input" defaultValue="CRONOGRAMA DA REFORMA RESIDENCIAL" />
              <Caret $wide />
            </FormulaRow>
            <SheetArea>
              <SheetView>
                <Sheet />
                <Chart />
              </SheetView>
              <VScroll><VThumb /></VScroll>
            </SheetArea>
            <HScroll><HThumb /><SplitGrip /></HScroll>
            <TabStrip>
              <TabNav>
                {['first', 'prev', 'next', 'last'].map((n) => (
                  <MenuItem key={n} aria-label={`${n} sheet`}><Icon name={n} size={11} /></MenuItem>
                ))}
                <Spacer />
                <MenuItem aria-label="Add sheet"><Icon name="addSheet" size={12} /></MenuItem>
              </TabNav>
              <TabList role="tablist">
                {tabs.map((name) => (
                  <Tab key={name} role="tab" aria-selected={name === 'Cronograma'} $on={name === 'Cronograma'}>{name}</Tab>
                ))}
              </TabList>
            </TabStrip>
          </Main>
          <Sidebar>
            <SideButton $first aria-label="Sidebar settings"><Icon name="menu" size={11} /></SideButton>
            {['properties', 'styles', 'gallery', 'navigator', 'fx'].map((n) => (
              <SideButton key={n} aria-label={n}><Icon name={n} size={13} /></SideButton>
            ))}
            <SideHandle />
          </Sidebar>
        </Work>
        <StatusBar>
          <Status><Icon name="disk" size={9} /></Status>
          <Status>Sheet 2 of 4</Status>
          <Status>Selected: 1 row, 12 columns</Status>
          <Status>PageStyle_Cronograma</Status>
          <Status $center>English (USA)</Status>
          <Status />
          <Status $center>
            <Svg $size={16} viewBox="0 0 16 16" fill="none" aria-hidden>
              <path d="M.5 5.500h9v6h-9z" fill="#fff" stroke={B} />
              <path d="M12 3.500h4M14 3.500v9M12 12.500h4" stroke={D} />
            </Svg>
          </Status>
          <Status />
          <Status />
          <Status $center>Average: ; Sum: 0</Status>
          <ZoomRow>
            <ZoomStep aria-label="Zoom out">−</ZoomStep>
            <ZoomSlider type="range" aria-label="Zoom" defaultValue={50} />
            <ZoomStep aria-label="Zoom in">+</ZoomStep>
          </ZoomRow>
          <ZoomValue>100%</ZoomValue>
        </StatusBar>
      </Window>
    </>
  );
}
